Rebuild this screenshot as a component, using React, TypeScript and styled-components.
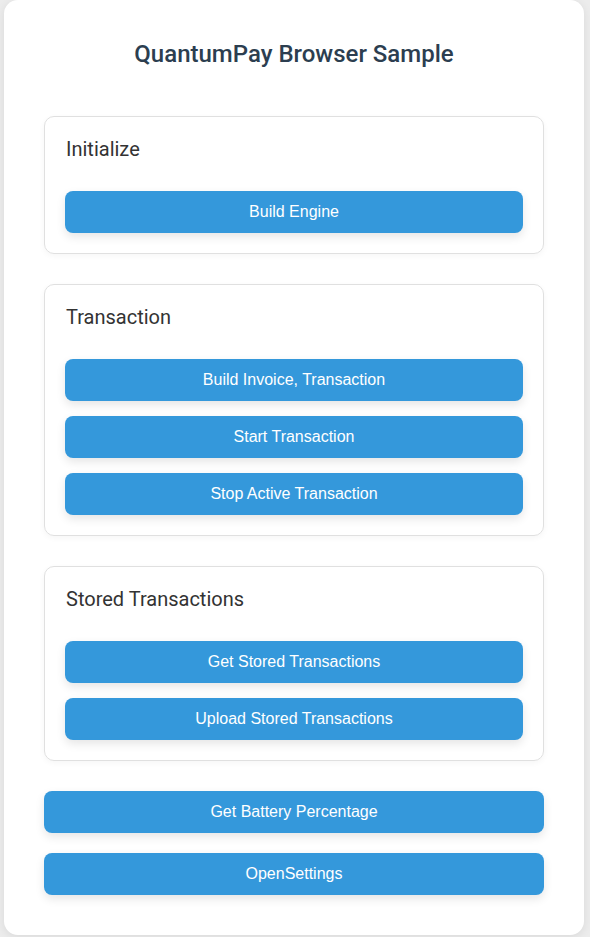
import React from "react";
import styled, { createGlobalStyle } from "styled-components";

const Global = createGlobalStyle`
  html, body { margin: 0; padding: 0; }
  body {
    background: #ececec;
    font-family: Roboto, "Noto Sans", sans-serif;
  }
`;

const Page = styled.div`
  padding: 0 6px 2px 4px;
`;

const Card = styled.main`
  background: #ffffff;
  border-radius: 14px;
  box-shadow: 0 2px 10px rgba(0, 0, 0, 0.08);
  padding: 40px;
  display: flex;
  flex-direction: column;
`;

const Title = styled.h1`
  margin: 0 0 48px;
  font-family: Roboto, sans-serif;
  font-weight: 500;
  font-size: 24px;
  line-height: 28px;
  color: #2c3e50;
  text-align: center;
`;

const Section = styled.section`
  border: 1px solid #e0e0e0;
  border-radius: 10px;
  padding: 20px 20px 20px 21px;
  margin-bottom: 30px;
  box-shadow: 0 2px 6px rgba(0, 0, 0, 0.04);
  display: flex;
  flex-direction: column;
  gap: 15px;
`;

const SectionTitle = styled.h2`
  margin: 0 0 15px;
  font-family: Roboto, sans-serif;
  font-weight: 400;
  font-size: 20px;
  line-height: 24px;
  color: #333333;
`;

const Button = styled.button`
  height: 42px;
  border: none;
  border-radius: 8px;
  background: #3498db;
  color: #ffffff;
  font-family: "Liberation Sans", Arial, sans-serif;
  font-size: 16px;
  cursor: pointer;
  box-shadow: 0 4px 10px rgba(0, 0, 0, 0.1);
  width: 100%;
`;

const SectionButton = styled(Button)`
  margin-left: -1px;
  width: calc(100% + 1px);
`;

const Actions = styled.div`
  display: flex;
  flex-direction: column;
  gap: 20px;
`;

const sections = [
  { title: "Initialize", buttons: ["Build Engine"] },
  {
    title: "Transaction",
    buttons: ["Build Invoice, Transaction", "Start Transaction", "Stop Active Transaction"],
  },
  {
    title: "Stored Transactions",
    buttons: ["Get Stored Transactions", "Upload Stored Transactions"],
  },
];

export default function App() {
  return (
    <>
      <Global />
      <Page>
        <Card>
          <Title>QuantumPay Browser Sample</Title>
          {sections.map((s) => (
            <Section key={s.title}>
              <SectionTitle>{s.title}</SectionTitle>
              {s.buttons.map((b) => (
                <SectionButton key={b}>{b}</SectionButton>
              ))}
            </Section>
          ))}
          <Actions>
            <Button>Get Battery Percentage</Button>
            <Button>OpenSettings</Button>
          </Actions>
        </Card>
      </Page>
    </>
  );
}
